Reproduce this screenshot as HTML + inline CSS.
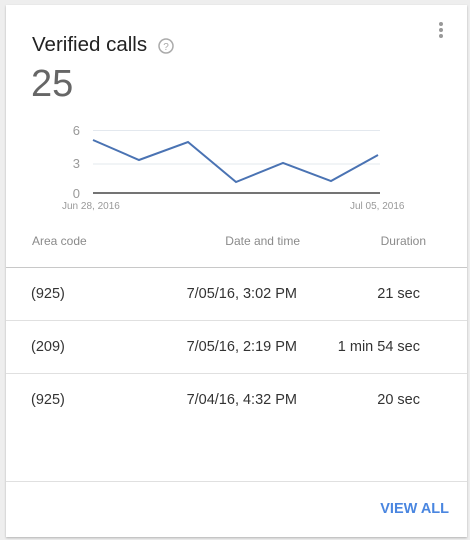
<!DOCTYPE html>
<html><head><style>
body{margin:0;width:470px;height:540px;background:#eeeeee;font-family:"Liberation Sans",sans-serif;position:relative;overflow:hidden}
.card{position:absolute;left:6px;top:5px;width:461px;height:532px;background:#fff;box-shadow:0 1px 2px rgba(0,0,0,.25)}
.t{position:absolute;white-space:nowrap}
.hr{position:absolute;left:6px;width:461px;height:1px;background:#e0e0e0}
.row{font-size:14.5px;color:#333}
.hd{font-size:12px;color:#8a8a8a}
</style></head><body>
<div class="card"></div>
<div class="t" style="left:32px;top:33px;font-size:20.5px;color:#222">Verified calls</div>
<svg style="position:absolute;left:157px;top:37px" width="18" height="18"><circle cx="9" cy="9" r="7" fill="none" stroke="#aaa" stroke-width="1.5"/><text x="9" y="13" font-size="10" text-anchor="middle" fill="#aaa" font-family="Liberation Sans">?</text></svg>
<div style="position:absolute;left:439px;top:22px;width:4px">
<div style="width:4px;height:4px;border-radius:2px;background:#999;margin-bottom:2px"></div>
<div style="width:4px;height:4px;border-radius:2px;background:#999;margin-bottom:2px"></div>
<div style="width:4px;height:4px;border-radius:2px;background:#999"></div></div>
<div class="t" style="left:31px;top:63px;font-size:38px;font-weight:300;color:#666">25</div>
<svg style="position:absolute;left:0;top:120px" width="470" height="95">
<line x1="93" y1="10.5" x2="380" y2="10.5" stroke="#e3e8ee"/>
<line x1="93" y1="44" x2="380" y2="44" stroke="#e3e8ee"/>
<line x1="93" y1="73" x2="380" y2="73" stroke="#222" stroke-width="1.3"/>
<g font-family="Liberation Sans" fill="#999" font-size="13" text-anchor="end">
<text x="80" y="15">6</text><text x="80" y="48">3</text><text x="80" y="78">0</text></g>
<polyline fill="none" stroke="#4a73b3" stroke-width="2" points="93,20 139,40 188,22 236,62 283,43 331,61 378,35"/>
<g font-family="Liberation Sans" fill="#999" font-size="10"><text x="62" y="89">Jun 28, 2016</text><text x="350" y="89">Jul 05, 2016</text></g>
</svg>
<div class="t hd" style="left:32px;top:234px">Area code</div>
<div class="t hd" style="right:170px;top:234px">Date and time</div>
<div class="t hd" style="right:44px;top:234px">Duration</div>
<div class="hr" style="top:267px;background:#c8c8c8"></div>
<div class="t row" style="left:31px;top:286px">(925)</div>
<div class="t row" style="right:173px;top:286px">7/05/16, 3:02 PM</div>
<div class="t row" style="right:50px;top:286px">21 sec</div>
<div class="hr" style="top:320px"></div>
<div class="t row" style="left:31px;top:339px">(209)</div>
<div class="t row" style="right:173px;top:339px">7/05/16, 2:19 PM</div>
<div class="t row" style="right:50px;top:339px">1 min 54 sec</div>
<div class="hr" style="top:373px"></div>
<div class="t row" style="left:31px;top:392px">(925)</div>
<div class="t row" style="right:173px;top:392px">7/04/16, 4:32 PM</div>
<div class="t row" style="right:50px;top:392px">20 sec</div>
<div class="hr" style="top:481px"></div>
<div class="t" style="right:21px;top:501px;font-size:14.5px;font-weight:bold;color:#4a86e0">VIEW ALL</div>
</body></html>
